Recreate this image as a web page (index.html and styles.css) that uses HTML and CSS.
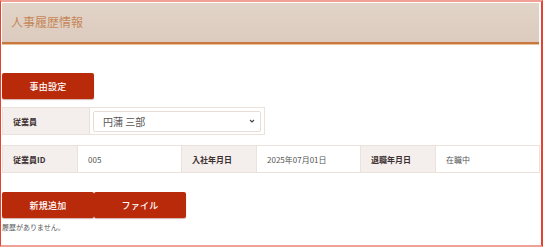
FILE: index.html
```html
<!DOCTYPE html>
<html lang="ja">
<head>
<meta charset="utf-8">
<link rel="stylesheet" href="styles.css">
</head>
<body>
<div class="frame">
  <div class="header"><h1 class="title">人事履歴情報</h1></div>
  <div class="content">
    <button class="btn btn-reason">事由設定</button>
    <table class="tbl tbl-emp">
      <tr>
        <th class="lbl lbl-emp">従業員</th>
        <td class="val val-emp">
          <div class="select">
            <span class="select-text">円蒲 三部</span>
            <svg class="chev" width="6" height="4" viewBox="0 0 6 4"><path d="M1 1 L3 3 L5 1" fill="none" stroke="#444" stroke-width="1.1"/></svg>
          </div>
        </td>
      </tr>
    </table>
    <table class="tbl tbl-info">
      <tr>
        <th class="lbl">従業員ID</th>
        <td class="val">005</td>
        <th class="lbl">入社年月日</th>
        <td class="val">2025年07月01日</td>
        <th class="lbl">退職年月日</th>
        <td class="val">在職中</td>
      </tr>
    </table>
    <div class="btn-row">
      <button class="btn btn-wide">新規追加</button>
      <button class="btn btn-wide">ファイル</button>
    </div>
    <p class="empty">履歴がありません。</p>
  </div>
</div>
</body>
</html>
```
FILE: styles.css
```css
* { box-sizing: border-box; }
html, body { margin: 0; padding: 0; background: #fff; }
body {
  font-family: "Noto Sans CJK JP", "Noto Sans", sans-serif;
  width: 543px;
  height: 247px;
  overflow: hidden;
}
.frame {
  width: 543px;
  height: 247px;
  border-left: 1px solid #e4432f;
  border-right: 2px solid #e4432f;
  border-top: 2px solid #f1a196;
  border-bottom: 2px solid #f1a196;
  padding: 1px 1px 0 1px;
}
.header {
  height: 41px;
  margin-right: 1px;
  background: linear-gradient(#e2d4c8, #dccbbe);
  border-bottom: 2px solid #c8783c;
  box-shadow: 0 1px 0 #e9c09c;
  display: flex;
  align-items: center;
  padding-left: 9px;
}
.title {
  margin: 0;
  font-size: 12px;
  font-weight: normal;
  color: #c6875a;
  padding-bottom: 2px;
}
.content {
  display: flex;
  flex-direction: column;
  align-items: flex-start;
  padding-top: 29px;
}
.btn {
  background: #b92a0a;
  color: #fff;
  border: none;
  border-radius: 2px;
  font-family: inherit;
  font-size: 9px;
  font-weight: 500;
  height: 26px;
  width: 92px;
  padding: 0;
  box-shadow: 0 1px 1px rgba(120,30,10,0.35);
  letter-spacing: 0.3px;
}
.tbl {
  border-collapse: collapse;
  table-layout: fixed;
}
.tbl th, .tbl td {
  border: 1px solid #ece2dc;
  font-size: 8px;
  padding: 0 0 0 10px;
  text-align: left;
  height: 27px;
}
.lbl {
  background: #f4eeed;
  color: #3b3030;
  font-weight: bold;
}
.val {
  color: #555;
  background: #fff;
  font-weight: normal;
}
.tbl-emp {
  margin-top: 8px;
  width: 263px;
}
.lbl-emp { width: 87px; }
.val-emp { padding: 0 3px 0 3px !important; }
.select {
  height: 21px;
  border: 1px solid #e7ddd6;
  border-radius: 2px;
  display: flex;
  align-items: center;
  justify-content: space-between;
  padding: 0 5px 0 9px;
}
.select-text {
  font-size: 10px;
  color: #555;
}
.tbl-info {
  margin-top: 10px;
  width: 538px;
}
.tbl-info .lbl { width: 75px; }
.tbl-info .val { width: 104px; }
.btn-row {
  display: flex;
  margin-top: 19px;
}
.btn-wide { width: 92px; }
.empty {
  margin: 4px 0 0 0;
  font-size: 7px;
  color: #555;
}
```
